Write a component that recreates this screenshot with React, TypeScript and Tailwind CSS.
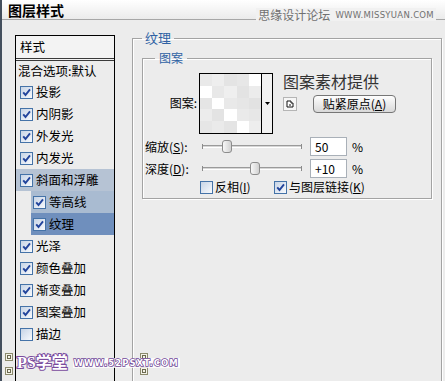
import React from "react";

type Effect = {
  label: string;
  checked: boolean;
  sub?: boolean;
  tone?: "bevel" | "contour" | "active";
};

const effects: Effect[] = [
  { label: "投影", checked: true },
  { label: "内阴影", checked: true },
  { label: "外发光", checked: true },
  { label: "内发光", checked: true },
  { label: "斜面和浮雕", checked: true, tone: "bevel" },
  { label: "等高线", checked: true, sub: true, tone: "contour" },
  { label: "纹理", checked: true, sub: true, tone: "active" },
  { label: "光泽", checked: true },
  { label: "颜色叠加", checked: true },
  { label: "渐变叠加", checked: true },
  { label: "图案叠加", checked: true },
  { label: "描边", checked: false },
];

const toneClass = {
  bevel: "bg-[#b6c3d4]",
  contour: "bg-[#a9bbd1]",
  active: "bg-[#6f8fbd]",
};

// light grey tiles of the pattern preview, row by row
const swatch = [
  "bg-[#e9e9e9]", "bg-[#eeeeee]", "bg-[#e4e4e4]", "bg-[#e7e7e7]", "bg-[#ffffff]",
  "bg-[#ffffff]", "bg-[#e8e8e8]", "bg-[#efefef]", "bg-[#e3e3e3]", "bg-[#ececec]",
  "bg-[#e5e5e5]", "bg-[#ffffff]", "bg-[#e9e9e9]", "bg-[#e6e6e6]", "bg-[#e2e2e2]",
  "bg-[#ececec]", "bg-[#e3e3e3]", "bg-[#ffffff]", "bg-[#eaeaea]", "bg-[#e7e7e7]",
  "bg-[#e6e6e6]", "bg-[#eaeaea]", "bg-[#e4e4e4]", "bg-[#ffffff]", "bg-[#ededed]",
];

function Check({ checked }: { checked: boolean }) {
  return (
    <span className="grid h-[13px] w-[13px] shrink-0 place-items-center border border-[#4573a8] bg-linear-to-br from-[#c7d4e6] to-[#f8fafd]">
      {checked && (
        <svg viewBox="0 0 11 11" className="h-[11px] w-[11px]">
          <path
            d="M2.2 5.4l2.3 2.6L9 2.4"
            fill="none"
            stroke="#22449c"
            strokeWidth="1.9"
          />
        </svg>
      )}
    </span>
  );
}

function Slider({ pos }: { pos: number }) {
  return (
    <div className="relative flex h-[13px] w-[100px] items-center">
      <div className="h-[5px] w-px bg-[#8a8a8a]" />
      <div className="h-[3px] flex-1 border-t border-b border-t-[#9a9a9a] border-b-white bg-[#d6d6d6]" />
      <div className="h-[5px] w-px bg-[#8a8a8a]" />
      <svg
        viewBox="0 0 10 13"
        className="absolute top-0 h-[13px] w-[10px]"
        style={{ left: pos - 5 }}
      >
        <defs>
          <linearGradient id="thumb" x1="0" y1="0" x2="1" y2="0">
            <stop offset="0" stopColor="#fafafa" />
            <stop offset="1" stopColor="#cfcfcf" />
          </linearGradient>
        </defs>
        <path
          d="M0.5 3 Q0.5 0.5 3 0.5 L7 0.5 Q9.5 0.5 9.5 3 L9.5 10 Q9.5 12.5 7 12.5 L3 12.5 Q0.5 12.5 0.5 10 Z"
          fill="url(#thumb)"
          stroke="#8c8c8c"
        />
      </svg>
    </div>
  );
}

function Field({ value }: { value: string }) {
  return (
    <div className="flex h-[19px] w-[37px] items-center border border-[#a9b0b8] bg-white pl-[4px] text-[12px] leading-none">
      {value}
    </div>
  );
}

function Mark() {
  return (
    <svg viewBox="0 0 8 8" className="h-[8px] w-[8px]">
      <rect x="0.5" y="0.5" width="7" height="7" fill="#f4f2e8" stroke="#8b8a6c" />
      <rect x="2.5" y="2.5" width="3" height="3" fill="none" stroke="#6b6a50" />
    </svg>
  );
}

export default function App() {
  return (
    <div className="relative flex h-[381px] w-[445px] flex-col overflow-hidden border-l-2 border-[#444f5d] bg-[#ececec] font-['Noto_Sans_CJK_SC','Noto_Sans',sans-serif] text-black">
      {/* title bar */}
      <div className="flex h-[20px] shrink-0 items-center border-b border-[#a7a7a7] bg-linear-to-b from-white to-[#ebebeb] pl-[6px]">
        <span className="text-[14px] font-bold leading-none">图层样式</span>
      </div>
      <div className="absolute right-[9px] top-[8px] flex items-end gap-[5px] bg-[#f1f1f1] px-[2px] text-[#707070]">
        <span className="text-[12px] leading-[13px]">思缘设计论坛</span>
        <span className="font-['DejaVu_Sans',sans-serif] text-[8.5px] leading-[11px] tracking-[0.3px]">
          WWW.MISSYUAN.COM
        </span>
      </div>

      <div className="flex items-start pl-[13px]">
        {/* effects list */}
        <div className="mt-[15px] h-[360px] w-[100px] shrink-0 border-x border-t border-black">
          <div className="flex h-[25px] items-center border-b-[3px] border-double border-[#3a3a3a] bg-[#f3f3f3] pl-[4px] text-[12.5px]">
            样式
          </div>
          <div className="flex h-[20px] items-center pl-[2px] text-[12.5px]">
            混合选项:默认
          </div>
          {effects.map((e) => (
            <div
              key={e.label}
              className={`flex h-[22px] items-center gap-[3px] text-[12.5px] ${
                e.sub ? "ml-[15px] pl-[2px]" : "pl-[4px]"
              } ${e.tone ? toneClass[e.tone] : ""}`}
            >
              <Check checked={e.checked} />
              <span>{e.label}</span>
            </div>
          ))}
        </div>

        {/* texture settings */}
        <fieldset className="ml-[17px] mt-[10px] h-[400px] w-[310px] shrink-0 border border-[#a3a3a3] px-[9px] shadow-[1px_1px_0_#fff,inset_1px_1px_0_#fff]">
          <legend className="px-[3px] text-[13px] leading-[16px] text-[#2f62a4]">
            纹理
          </legend>
          <fieldset className="mt-[4px] h-[149px] w-[290px] border border-[#a3a3a3] shadow-[1px_1px_0_#fff,inset_1px_1px_0_#fff]">
            <legend className="ml-[12px] px-[4px] text-[12px] leading-[16px] text-[#2f62a4]">
              图案
            </legend>
            <div className="flex flex-col pt-[6px] text-[12px]">
              <div className="flex h-[62px] items-start">
                <span className="w-[54px] self-center text-right">图案:</span>
                <div className="ml-[2px] mt-[1px] flex h-[61px] w-[74px] border border-black">
                  <div className="grid w-[61px] grid-cols-5 grid-rows-5">
                    {swatch.map((c, i) => (
                      <div key={i} className={c} />
                    ))}
                  </div>
                  <div className="grid w-[11px] place-items-center border-l border-black bg-[#f2f2f2]">
                    <svg viewBox="0 0 5 3" className="h-[3px] w-[5px]">
                      <path d="M0 0h5L2.5 3z" fill="#000" />
                    </svg>
                  </div>
                </div>
                <div className="ml-[10px] flex flex-col">
                  <span className="text-[16px] leading-[18px] text-[#333]">图案素材提供</span>
                  <div className="mt-[5px] flex items-center">
                    <div className="grid h-[14px] w-[14px] place-items-center border border-[#b5b5b5] bg-[#f6f6f6]">
                      <svg viewBox="0 0 8 8" className="h-[8px] w-[8px]">
                        <path d="M1 1h4v2h2v4H1z" fill="#fff" stroke="#111" strokeWidth="1" />
                        <path d="M3 5h2" stroke="#111" />
                      </svg>
                    </div>
                    <button className="ml-[16px] flex h-[18px] w-[83px] items-center justify-center rounded-[4px] border border-[#767676] bg-linear-to-b from-[#fefefe] to-[#d9d9d9] text-[12px] leading-none">
                      贴紧原点(<span className="underline">A</span>)
                    </button>
                  </div>
                </div>
              </div>

              <div className="mt-[3px] flex h-[19px] items-center">
                <span className="w-[56px] pl-[2px]">
                  缩放(<span className="underline">S</span>):
                </span>
                <div className="ml-[3px]">
                  <Slider pos={25} />
                </div>
                <div className="ml-[8px]">
                  <Field value="50" />
                </div>
                <span className="ml-[5px]">%</span>
              </div>

              <div className="mt-[3px] flex h-[19px] items-center">
                <span className="w-[56px] pl-[2px]">
                  深度(<span className="underline">D</span>):
                </span>
                <div className="ml-[3px]">
                  <Slider pos={53} />
                </div>
                <div className="ml-[8px]">
                  <Field value="+10" />
                </div>
                <span className="ml-[5px]">%</span>
              </div>

              <div className="mt-[2px] flex h-[14px] items-center pl-[57px]">
                <div className="flex w-[74px] items-center gap-[2px]">
                  <Check checked={false} />
                  <span>
                    反相(<span className="underline">I</span>)
                  </span>
                </div>
                <div className="flex items-center gap-[2px]">
                  <Check checked />
                  <span>
                    与图层链接(<span className="underline">K</span>)
                  </span>
                </div>
              </div>
            </div>
          </fieldset>
        </fieldset>
      </div>

      {/* watermark overlays */}
      <div className="absolute left-[3px] top-[353px] flex flex-col gap-[6px]">
        <Mark />
        <Mark />
      </div>
      <div className="absolute left-[138px] top-[353px] flex flex-col gap-[6px]">
        <Mark />
        <Mark />
      </div>
      <div className="absolute left-[15px] top-[355px] flex items-center gap-[5px]">
        <span className="font-['Liberation_Serif','Noto_Sans_CJK_SC',serif] text-[16px] font-bold leading-none text-white [-webkit-text-stroke:2px_#7a4b9e] [paint-order:stroke_fill]">
          PS学堂
        </span>
        <span className="bg-white/80 px-[1px] font-['DejaVu_Sans',sans-serif] text-[8.5px] font-bold leading-[10px] tracking-[1px] text-white [-webkit-text-stroke:1.5px_#6e4596] [paint-order:stroke_fill]">
          WWW.52PSXT.COM
        </span>
      </div>
    </div>
  );
}
